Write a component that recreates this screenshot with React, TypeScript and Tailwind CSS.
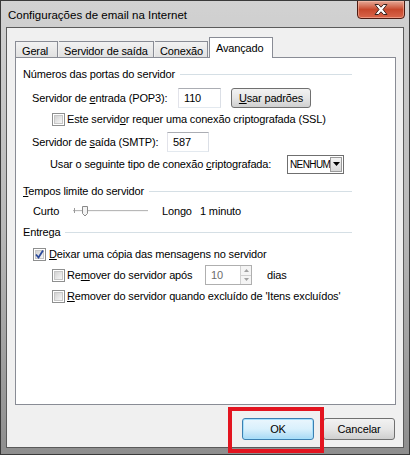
import React from 'react'

function CheckBox({ checked = false }: { checked?: boolean }) {
  return (
    <div className="w-[13px] h-[13px] shrink-0 border border-[#8e8f8f] bg-white p-px">
      <div className="relative w-full h-full border border-[#c6c6c6] bg-gradient-to-br from-[#d2d2d2] to-[#f7f7f7]">
        {checked && (
          <svg className="absolute -left-[2px] -top-[2px]" width="11" height="11" viewBox="0 0 11 11">
            <path d="M2 5.5 L4.5 8.5 L9 1.5" fill="none" stroke="#2b4a9b" strokeWidth="1.8" />
          </svg>
        )}
      </div>
    </div>
  )
}

function GroupHeader({ children }: { children: React.ReactNode }) {
  return (
    <div className="flex items-center h-[20px] ml-[7px] mr-[43px]">
      <span className="whitespace-nowrap">{children}</span>
      <div className="flex-1 h-px bg-[#d5dfe5] ml-[5px]" />
    </div>
  )
}

function TextBox({ value, w }: { value: string; w: string }) {
  return (
    <div className={`${w} h-[20px] shrink-0 border border-[#abadb3] border-l-[#e2e3ea] border-r-[#dbdfe6] border-b-[#e3e9ef] bg-white flex items-center pl-[5px]`}>
      {value}
    </div>
  )
}

function Slider() {
  return (
    <svg width="76" height="14" viewBox="0 0 76 14" className="shrink-0">
      <line x1="0" y1="6.5" x2="75" y2="6.5" stroke="#b8b8b8" />
      <line x1="0" y1="7.5" x2="75" y2="7.5" stroke="#f4f4f4" />
      <line x1="1.5" y1="4" x2="1.5" y2="9" stroke="#9a9a9a" />
      <path d="M9.5 2.5 H14.5 V9.5 L12 12 L9.5 9.5 Z" fill="#f3f3f3" stroke="#8a8a8a" />
    </svg>
  )
}

export default function App() {
  return (
    <div className="relative w-[410px] h-[455px] flex flex-col border border-[#3a3a3a] bg-gradient-to-b from-[#d2d2d2] via-[#b8b8b8] to-[#8e8e8e] text-[11px] tracking-[-0.15px] text-black font-['Liberation_Sans',Arial,sans-serif] overflow-hidden">
      {/* Title bar */}
      <div className="h-[26px] flex items-start shrink-0">
        <div className="pl-[7px] pt-[6px] text-[11.5px] tracking-normal text-black whitespace-nowrap">
          Configurações de email na Internet
        </div>
        <div className="ml-auto mr-[4px] -mt-px w-[48px] h-[19px] rounded-b-[4px] border border-[#4d1b12] bg-gradient-to-b from-[#e4a896] via-[#c7482c] to-[#d9654a] flex items-center justify-center shadow-[inset_0_0_0_1px_rgba(255,200,180,0.5)]">
          <svg width="14" height="11" viewBox="0 0 14 11">
            <path
              d="M1 0.5 H4.5 L7 3.2 L9.5 0.5 H13 L9 5.5 L13 10.5 H9.5 L7 7.8 L4.5 10.5 H1 L5 5.5 Z"
              fill="#ffffff"
              stroke="#3a2420"
              strokeWidth="1"
              strokeLinejoin="round"
            />
          </svg>
        </div>
      </div>

      {/* Client area */}
      <div className="mx-[5px] mb-[6px] flex-1 border border-[#5a5a5a] bg-[#f0f0f0] flex flex-col">
        {/* Tabs */}
        <div className="h-[20px] mt-[9px] ml-[8px] flex items-end shrink-0">
          <div className="w-[43px] h-[16px] border border-b-0 border-[#898c95] bg-gradient-to-b from-[#f2f2f2] to-[#e1e1e1] pl-[6px] pt-[1px]">Geral</div>
          <div className="w-[95px] h-[16px] border border-b-0 border-l-0 border-[#898c95] bg-gradient-to-b from-[#f2f2f2] to-[#e1e1e1] pl-[5px] pt-[1px] ml-px">Servidor de saída</div>
          <div className="w-[53px] h-[16px] border border-b-0 border-l-0 border-[#898c95] bg-gradient-to-b from-[#f2f2f2] to-[#e1e1e1] pl-[5px] pt-[1px] ml-px">Conexão</div>
          <div className="relative z-10 w-[64px] h-[21px] -mb-px ml-px border border-b-0 border-[#898c95] bg-white pl-[6px] pt-[2px]">Avançado</div>
        </div>

        {/* Panel */}
        <div className="ml-[8px] mr-[7px] h-[348px] shrink-0 border border-[#898c95] bg-white flex flex-col pt-[6px]">
          <GroupHeader>Números das portas do servidor</GroupHeader>

          <div className="flex items-center h-[22px] mt-[3px] ml-[16px]">
            <span className="w-[146px] shrink-0">Servidor de <u>e</u>ntrada (POP3):</span>
            <TextBox value="110" w="w-[43px]" />
            <div className="ml-[10px] w-[80px] h-[20px] rounded-[3px] border border-[#707070] bg-gradient-to-b from-[#f2f2f2] via-[#e6e6e6] to-[#cfcfcf] flex items-center justify-center">
              <span><u>U</u>sar padrões</span>
            </div>
          </div>

          <div className="flex items-center h-[20px] ml-[36px]">
            <CheckBox />
            <span className="ml-[2px]">Este servid<u>o</u>r requer uma conexão criptografada (SSL)</span>
          </div>

          <div className="flex items-center h-[22px] mt-[2px] ml-[16px]">
            <span className="w-[135px] shrink-0">Servidor de <u>s</u>aída (SMTP):</span>
            <TextBox value="587" w="w-[42px]" />
          </div>

          <div className="flex items-center h-[22px] ml-[34px]">
            <span className="w-[237px] shrink-0">Usar o seguinte tipo de conexão <u>c</u>riptografada:</span>
            <div className="w-[57px] h-[19px] border border-[#6f6f6f] bg-white flex items-center pl-[2px]">
              <span className="flex-1 text-[10px] tracking-[-0.6px]">NENHUM</span>
              <div className="w-[16px] h-[15px] mr-px border border-[#9a9a9a] bg-gradient-to-b from-[#f4f4f4] to-[#d8d8d8] flex items-center justify-center">
                <svg width="7" height="4" viewBox="0 0 7 4"><path d="M0 0 H7 L3.5 4 Z" fill="#000" /></svg>
              </div>
            </div>
          </div>

          <div className="mt-[6px]">
            <GroupHeader><u>T</u>empos limite do servidor</GroupHeader>
          </div>

          <div className="flex items-center h-[20px] ml-[17px]">
            <span className="w-[40px] shrink-0">Curto</span>
            <Slider />
            <span className="ml-[13px] w-[38px] shrink-0">Longo</span>
            <span>1 minuto</span>
          </div>

          <div className="mt-px">
            <GroupHeader>Entrega</GroupHeader>
          </div>

          <div className="flex items-center h-[20px] mt-[2px] ml-[17px]">
            <CheckBox checked />
            <span className="ml-[3px]"><u>D</u>eixar uma cópia das mensagens no servidor</span>
          </div>

          <div className="flex items-center h-[22px] ml-[36px]">
            <CheckBox />
            <span className="ml-[2px] w-[138px] shrink-0">Re<u>m</u>over do servidor após</span>
            <div className="w-[47px] h-[20px] border border-[#afafaf] bg-white flex items-center pl-[5px] text-[#6d6d6d]">
              <span className="flex-1">10</span>
              <div className="w-[11px] h-[18px] flex flex-col border-l border-[#d0d0d0]">
                <div className="flex-1 flex items-center justify-center border-b border-[#d0d0d0] bg-[#f4f4f4]">
                  <svg width="5" height="3" viewBox="0 0 5 3"><path d="M0 3 H5 L2.5 0 Z" fill="#a0a0a0" /></svg>
                </div>
                <div className="flex-1 flex items-center justify-center bg-[#f4f4f4]">
                  <svg width="5" height="3" viewBox="0 0 5 3"><path d="M0 0 H5 L2.5 3 Z" fill="#a0a0a0" /></svg>
                </div>
              </div>
            </div>
            <span className="ml-[15px]">dias</span>
          </div>

          <div className="flex items-center h-[20px] ml-[36px]">
            <CheckBox />
            <span className="ml-[2px]"><u>R</u>emover do servidor quando excluído de 'Itens excluídos'</span>
          </div>
        </div>

        {/* Buttons */}
        <div className="flex justify-end gap-[9px] mr-[8px] mt-[13px]">
          <div className="w-[72px] h-[22px] rounded-[3px] border border-[#3c7fb1] bg-gradient-to-b from-[#eaf6fd] via-[#d9f0fc] to-[#a7d9f5] shadow-[inset_0_0_0_1px_#a6e0fb] flex items-center justify-center">OK</div>
          <div className="w-[72px] h-[22px] rounded-[3px] border border-[#707070] bg-gradient-to-b from-[#f2f2f2] via-[#e6e6e6] to-[#cfcfcf] flex items-center justify-center">Cancelar</div>
        </div>
      </div>

      {/* Highlight annotation */}
      <div className="absolute left-[227px] top-[406px] w-[96px] h-[46px] border-[4px] border-[#e3141f] pointer-events-none" />
    </div>
  )
}
